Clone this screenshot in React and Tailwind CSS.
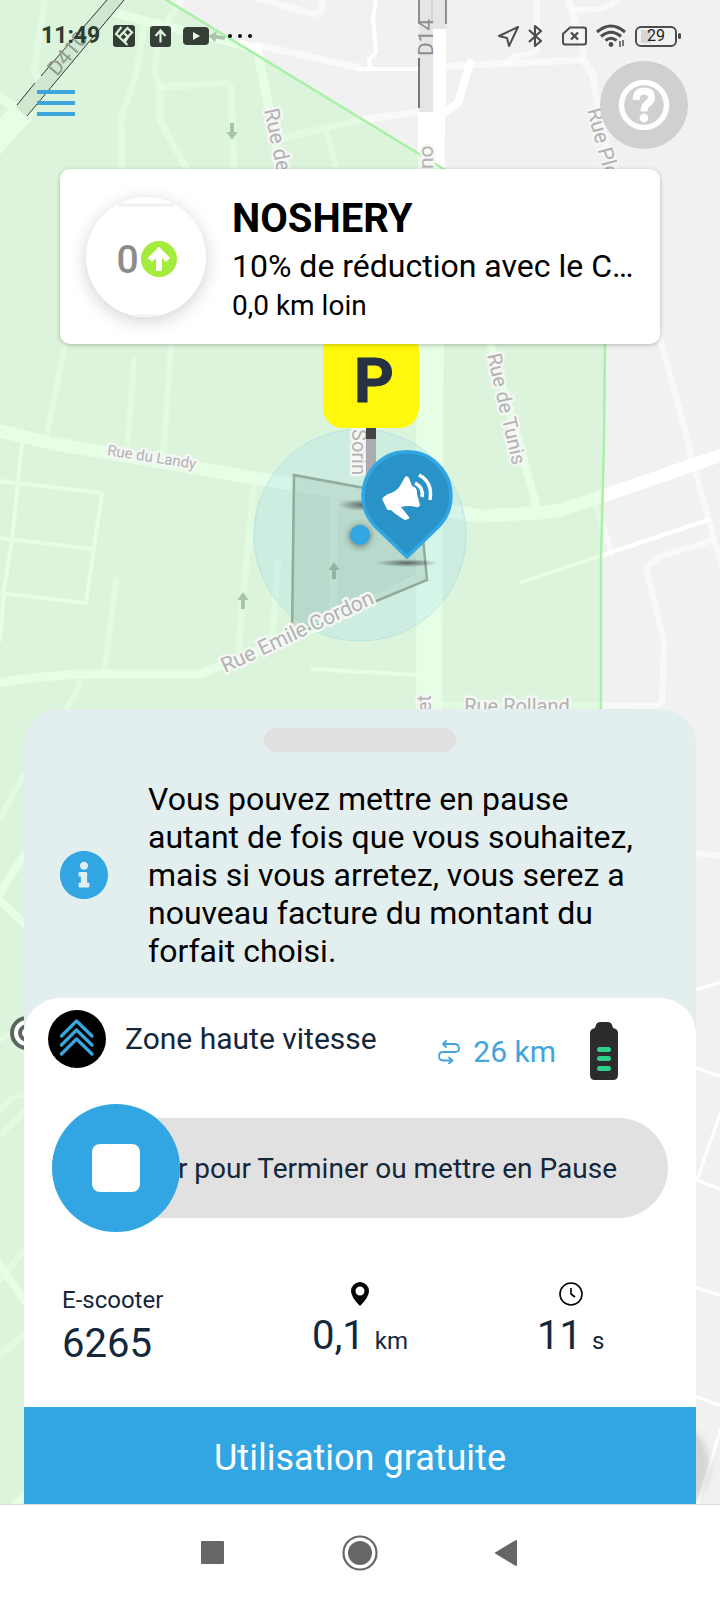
import { FaInfoCircle } from 'react-icons/fa';

// [points, width] of every street on the map
const ROADS = [
  ['45,0 34,70 40,82', 7],
  ['22,112 -10,148', 24],
  ['-4,94 20,112', 9],
  ['113,12 145,21 257,49', 9],
  ['257,45 360,68', 7],
  ['145,20 136,75 121,118 122,170', 7],
  ['182,0 166,24 158,32 155,75 160,87 160,120 187,170', 7],
  ['160,87 226,83 231,88 234,170', 7],
  ['257,48 281,170 300,260', 9],
  ['285,138 360,120 420,112', 7],
  ['327,133 337,170', 6],
  ['250,-4 312,14 321,12 323,0', 7],
  ['376,0 373,18 376,52 369,60 370,68', 4],
  ['360,69 420,69', 4],
  ['446,66 580,60', 7],
  ['470,63 458,103 445,112', 8],
  ['537,0 537,50 530,54 514,56 508,62', 6],
  ['568,0 583,45 583,60 593,75 600,120 620,200', 7],
  ['573,10 600,9 612,5 620,-3', 6],
  ['655,320 685,430 693,463 708,517 722,566', 6],
  ['65,345 47,434', 6],
  ['134,360 127,450', 6],
  ['171,345 163,460', 6],
  ['-4,430 50,443 180,465 253,478 345,493 480,516 540,513 560,510 600,497 722,455', 13],
  ['22,443 12,540 4,590 0,640', 4],
  ['0,481 102,493 86,603 0,593', 4],
  ['0,538 91,549', 4],
  ['116,580 104,672', 6],
  ['254,483 240,630 239,650', 7],
  ['278,564 272,640', 7],
  ['-4,683 40,677 80,674 200,674 230,662 310,630 420,577', 9],
  ['82,676 75,695 24,775 0,818', 6],
  ['24,855 0,893', 8],
  ['-3,898 26,925', 8],
  ['334,490 333,620', 8],
  ['312,669 417,675', 4],
  ['488,335 520,445 538,512', 8],
  ['594,500 612,553', 6],
  ['522,582 612,552 708,520', 4],
  ['713,540 660,557 646,567 664,642 662,702 656,706 440,705', 6],
  ['26,1025 0,1040', 5],
  ['26,1094 12,1098 0,1110', 5],
  ['26,1110 0,1135', 6],
  ['-2,1263 26,1303', 8],
  ['26,1248 0,1280', 6],
  ['26,1333 -2,1357', 7],
  ['28,1492 12,1508', 8],
  ['694,853 722,856', 6],
  ['694,990 722,982', 3],
  ['694,1067 722,1077', 3],
  ['722,1108 697,1180 722,1190', 3],
  ['694,1287 722,1296', 3],
  ['694,1396 722,1406', 3],
  ['722,1425 697,1506', 3],
];

// [text, x, y, angle, size, anchor]
const LABELS = [
  ['Rue de', 264, 110, 78, 21, 'start'],
  ['Rue Ple', 587, 110, 75, 21, 'start'],
  ['no', 433, 169, -90, 21, 'start'],
  ['Rue du Landy', 151, 462, 9, 15, 'middle'],
  ['Rue de Tunis', 487, 355, 77, 20, 'start'],
  ['Sorin', 352, 429, 90, 20, 'start'],
  ['Rue Emile Cordon', 225, 673, -25, 21, 'start'],
  ['Rue Rolland', 517, 713, 0, 20, 'middle'],
  ['et', 431, 712, -90, 20, 'start'],
];

function OneWayArrow({ x, y, angle = 0, color = '#a9c4ab' }) {
  return (
    <path
      d="M0 -9 L5.500 -1 H2 V8 H-2 V-1 H-5.500 Z"
      fill={color}
      transform={`translate(${x} ${y}) rotate(${angle})`}
    />
  );
}

function CityMap() {
  return (
    <svg
      className="absolute inset-0 w-full h-full"
      viewBox="0 0 720 1504"
      preserveAspectRatio="xMidYMin slice"
      fontFamily="Roboto, sans-serif"
      aria-hidden="true"
    >
      <defs>
        <filter id="soft" x="-50%" y="-100%" width="200%" height="300%">
          <feGaussianBlur stdDeviation="3" />
        </filter>
        <radialGradient id="ground">
          <stop offset="0" stopColor="#333" stopOpacity="0.7" />
          <stop offset="1" stopColor="#333" stopOpacity="0" />
        </radialGradient>
      </defs>
      <rect width="720" height="1504" fill="#f1f1f1" />

      <g fill="none" stroke="#fff" strokeLinejoin="round" strokeLinecap="round">
        {ROADS.map(([points, width]) => (
          <polyline key={points} points={points} strokeWidth={width} strokeOpacity={width < 8 && width > 4 ? 0.6 : 1} />
        ))}
      </g>
      <path d="M418 112 H445 L443 470 L439 1504 H417 L416 470 Z" fill="#fff" />

      {/* D14 tunnel */}
      <path d="M419 0 H446 V29 H433 V112 H419 Z" fill="#e5e5e5" />
      <path d="M433 29 H446 V113 H433 Z" fill="#fff" />
      <path d="M432 0 V24" stroke="#c4c4c4" />
      <path d="M419 0 V24 M446 0 V24" stroke="#333" />
      <path d="M419 58 V108" stroke="#777" strokeWidth="2" />

      {/* geofence */}
      <path
        d="M-5 -5 H158 L166 0 L442 168 L605 268 V344 L604 470 L601 560 V1510 H-5 Z"
        fill="rgb(165,250,165)"
        fillOpacity="0.29"
      />
      <path d="M160 -4 L442 168 L605 268 V344 L604 440 L601 560 V1510" fill="none" stroke="#a9f0a9" strokeWidth="2.5" />

      {/* D410 tunnel */}
      <path d="M107 0 H124 L26 116 L15 106 Z" fill="#d0e8d0" />
      <path d="M107 0 L41 76 M35 83 L17 105 M124 0 L27 116" stroke="#333" fill="none" />
      <text transform="translate(57 77) rotate(-50)" fontSize="21" fill="#8f9a90">D410</text>
      <text transform="translate(433 56) rotate(-90)" fontSize="21" fill="#8f8f8f">D14</text>

      <OneWayArrow x={232} y={131} angle={180} />
      <OneWayArrow x={217} y={37} angle={-82} />
      <OneWayArrow x={243} y={601} />

      {/* accuracy halo and free zone */}
      <circle cx="360" cy="535" r="106" fill="#8fd3f0" fillOpacity="0.2" stroke="#a9dbe4" strokeOpacity="0.6" />
      <path
        d="M294 475 L370 489 L422 528 L427 580 L292 636 Z"
        fill="#5a7568"
        fillOpacity="0.17"
        stroke="#8fac9f"
        strokeWidth="2.5"
      />
      <OneWayArrow x={334} y={571} color="#94b3a3" />

      {LABELS.map(([text, x, y, angle, size, anchor]) => (
        <text
          key={text}
          transform={`translate(${x} ${y}) rotate(${angle})`}
          fontSize={size}
          textAnchor={anchor}
          fill="#b2b2b2"
          stroke="#f4f7f4"
          strokeWidth="5"
          strokeLinejoin="round"
          paintOrder="stroke"
        >
          {text}
        </text>
      ))}

      {/* transit stop under the sheet */}
      <circle cx="27" cy="1033" r="15" fill="#fff" stroke="#5d665e" strokeWidth="4" />
      <circle cx="27" cy="1033" r="7" fill="none" stroke="#5d665e" strokeWidth="4" />

      {/* locate button under the sheet */}
      <circle cx="664" cy="1466" r="46" fill="#999" opacity="0.3" filter="url(#soft)" />
      <circle cx="664" cy="1459" r="40" fill="#d4d4d4" />

      {/* parking sign */}
      <ellipse cx="364" cy="505" rx="26" ry="6" fill="url(#ground)" />
      <rect x="366" y="428" width="10" height="72" fill="#abacb2" />
      <rect x="366" y="428" width="10" height="11" fill="#444" />
      <rect x="323" y="330" width="96" height="98" rx="20" fill="#fff80c" />
      <text
        x="374"
        y="402"
        fontSize="62"
        fontWeight="700"
        textAnchor="middle"
        fill="#253145"
        stroke="#253145"
        strokeWidth="1"
      >
        P
      </text>

      {/* current position */}
      <circle cx="360" cy="536" r="11" fill="#333" opacity="0.5" filter="url(#soft)" />
      <circle cx="360" cy="535" r="10" fill="#32a6e2" />

      {/* promo pin */}
      <ellipse cx="407" cy="563" rx="31" ry="4" fill="url(#ground)" />
      <path
        d="M407 557 L375 526 A44 44 0 1 1 439 526 Z"
        fill="#2992c6"
        stroke="#32a6e2"
        strokeWidth="3.5"
        strokeLinejoin="round"
      />
      <path
        d="M382 499 Q383 497 388 494 Q396 492 400 486 L405 477 Q407 475 409 478 L412 486 Q418 488 417 494 L420 505 Q419 508 416 507 Q408 505 401 507 L409 517 Q410 519 408 519 L405 520 Q396 515 391 510 Q387 511 386 507 Z"
        fill="#fff"
      />
      <g fill="none" stroke="#fff" strokeWidth="3.5">
        <path d="M415 483 Q424 488 422 497" />
        <path d="M419 475 Q433 482 430 500" />
      </g>
    </svg>
  );
}

function StatusBar() {
  return (
    <div className="flex h-[50px] items-end justify-between pr-[39px] pl-[41px] text-[#2f3a30]">
      <div className="flex h-7 items-center">
        <span className="text-[23px] leading-7 font-bold">11:49</span>
        <svg className="ml-3 h-6 w-6" viewBox="0 0 24 24">
          <rect x="1" y="1" width="22" height="22" rx="3" fill="#363f36" />
          <g fill="none" stroke="#dcf3dc" strokeWidth="2.2">
            <path d="M9.500 3 L4 10 L15.500 21" />
            <path d="M7.500 12.500 L15.500 4 L20 8.500 L12 16.500" />
            <path d="M11.500 8.500 L16 13 L13 18" />
          </g>
        </svg>
        <svg className="ml-3 h-6 w-6" viewBox="0 0 24 24">
          <rect x="2" y="2" width="21" height="21" rx="3" fill="#363f36" />
          <path d="M12.500 18.500 V7 M7.500 12 L12.500 6.500 L17.500 12" fill="none" stroke="#dcf3dc" strokeWidth="2.200" />
        </svg>
        <svg className="ml-2.5 h-6 w-7" viewBox="0 0 28 24">
          <rect x="1" y="3" width="26" height="18" rx="4" fill="#363f36" />
          <path d="M11 8 L18 12 L11 16 Z" fill="#e9f9e9" />
        </svg>
        <svg className="ml-[18px] h-6 w-6" viewBox="0 0 24 24" fill="#111">
          <circle cx="2" cy="12" r="2" />
          <circle cx="12" cy="12" r="2" />
          <circle cx="22" cy="12" r="2" />
        </svg>
      </div>
      <div className="flex h-7 items-center text-[#4c4c4c]">
        <svg className="h-6 w-6" viewBox="0 0 24 24" fill="none" stroke="currentColor" strokeWidth="2" strokeLinejoin="round">
          <path d="M21 3 L2 12 L10 14 L12 22 Z" />
        </svg>
        <svg className="ml-1 h-6 w-5" viewBox="0 0 20 24" fill="none" stroke="currentColor" strokeWidth="2.200" strokeLinejoin="round">
          <path d="M4 6 L16 17 L10 22 V2 L16 7 L4 18" />
        </svg>
        <svg className="ml-4 h-6 w-7" viewBox="0 0 28 24" fill="none" stroke="currentColor" strokeWidth="2">
          <path d="M9 3.500 H23 Q25 3.500 25 5.500 V18 Q25 20.500 23 20.500 H4 Q2 20.500 2 18 V10 Z" />
          <path d="M10 8.500 L17 15.500 M17 8.500 L10 15.500" strokeWidth="2.400" />
        </svg>
        <svg className="ml-1.5 h-6 w-8" viewBox="0 0 32 24" fill="none" stroke="currentColor" strokeWidth="3">
          <path d="M2 8 Q16 -4 30 8" />
          <path d="M6 12.500 Q16 4 26 12.500" />
          <path d="M10.500 16.500 Q16 12 21.500 16.500" />
          <circle cx="16" cy="20.500" r="2.400" fill="currentColor" stroke="none" />
          <path d="M25 17 V23 M28 16 V22" strokeWidth="1.500" />
        </svg>
        <div className="relative ml-2 flex h-[21px] w-[42px] items-center justify-center rounded-md border-2 border-current text-base leading-4">
          <span className="absolute inset-y-0.5 left-1 w-2.5 bg-[#d6d6d6]"></span>
          <span className="relative text-[#222]">29</span>
        </div>
        <span className="ml-px h-1.5 w-[3px] rounded bg-current"></span>
      </div>
    </div>
  );
}

function PromoCard() {
  return (
    <a
      href="#promo"
      className="mx-[60px] mt-5 flex h-[175px] items-center gap-[26px] rounded-[10px] bg-white pr-6 pl-[26px] text-black shadow-[0_1px_4px_rgba(0,0,0,0.25)]"
    >
      <span className="flex h-[120px] w-[120px] shrink-0 items-center justify-center rounded-full bg-white shadow-[0_4px_18px_rgba(0,0,0,0.18)]">
        <svg className="h-full w-full" viewBox="0 0 120 120">
          <path d="M32 8 H88" stroke="#eef2f5" strokeWidth="3" />
          <path d="M46 118.500 H74" stroke="#eef2f5" strokeWidth="2" />
          <text x="41.500" y="76" fontFamily="Roboto, sans-serif" fontSize="39" fontWeight="500" textAnchor="middle" fill="#8c8c8c">0</text>
          <circle cx="73" cy="62" r="18" fill="#a4ec3c" />
          <path d="M73 74 V56 M64 63 L73 54 L82 63" fill="none" stroke="#fff" strokeWidth="6" />
        </svg>
      </span>
      <span className="flex min-w-0 flex-col pt-1">
        <span className="text-[40px] leading-[50px] font-bold">NOSHERY</span>
        <span className="truncate text-[32px] leading-[44px]">10% de réduction avec le C…</span>
        <span className="text-[28px] leading-9">0,0 km loin</span>
      </span>
    </a>
  );
}

function InfoNotice() {
  return (
    <div className="flex flex-col px-9 pt-[19px] pb-7">
      <div className="h-6 w-48 self-center rounded-full bg-[#e0e0e0]"></div>
      <div className="mt-7 flex items-center gap-10">
        <FaInfoCircle viewBox="8 8 496 496" className="h-12 w-12 shrink-0 text-[#32a6e2]" />
        <p className="text-[32px] leading-[38px] text-black">
          Vous pouvez mettre en pause<br />
          autant de fois que vous souhaitez,<br />
          mais si vous arretez, vous serez a<br />
          nouveau facture du montant du<br />
          forfait choisi.
        </p>
      </div>
    </div>
  );
}

function VehicleHeader() {
  return (
    <div className="flex items-start pt-3 pr-[78px] pl-6">
      <svg className="h-[58px] w-[58px] shrink-0" viewBox="0 0 58 58">
        <circle cx="29" cy="29" r="29" fill="#000" />
        <g fill="none" stroke="#3aa4dc" strokeWidth="3.400" strokeLinecap="round" strokeLinejoin="round">
          <path d="M13.500 26 L28.500 11 L44 26" />
          <path d="M13.500 35 L28.500 20 L44 35" />
          <path d="M13.500 44 L28.500 29 L44 44" />
        </g>
      </svg>
      <span className="ml-[19px] text-[30px] leading-[58px]">Zone haute vitesse</span>
      <div className="mt-6 ml-auto flex items-center text-[#41a5dc]">
        <svg className="mr-3 h-6 w-6" viewBox="0 0 24 24" fill="none" stroke="currentColor" strokeWidth="1.800" strokeLinecap="round" strokeLinejoin="round">
          <path d="M9 1 L6 4 L9 7 M6 4 H17 Q22 4 22 8.500 Q22 12 18 12 H6 Q2 12 2 16 Q2 20.500 6 20.500 H15 M12 17.500 L15.500 20.500 L12 23.500" />
        </svg>
        <span className="text-[30px] leading-9">26 km</span>
      </div>
      <svg className="mt-3 ml-[34px] h-[58px] w-7" viewBox="0 0 28 58">
        <path d="M5 6 Q6 0 10 0 H18 Q22 0 23 6 Q28 7 28 11 V53 Q28 58 23 58 H5 Q0 58 0 53 V11 Q0 7 5 6 Z" fill="#2c2c2c" />
        <g fill="#2fd08a">
          <rect x="7" y="25" width="14" height="5" rx="2.500" />
          <rect x="7" y="34" width="14" height="5" rx="2.500" />
          <rect x="7" y="44" width="14" height="5" rx="2.500" />
        </g>
      </svg>
    </div>
  );
}

function SwipeControl() {
  return (
    <div className="mt-6 mr-7 ml-7 grid items-center">
      <div className="col-start-1 row-start-1 flex h-[100px] items-center justify-end overflow-hidden rounded-full bg-[#e1e1e1] pt-0.5 pr-[51px]">
        <span className="text-right text-[28px] leading-9 whitespace-nowrap">r pour Terminer ou mettre en Pause</span>
      </div>
      <button
        aria-label="Terminer"
        className="col-start-1 row-start-1 flex h-32 w-32 items-center justify-center rounded-full bg-[#32a6e2]"
      >
        <span className="h-12 w-12 rounded-lg bg-white"></span>
      </button>
    </div>
  );
}

function TripStats() {
  return (
    <div className="grid grid-cols-3 px-5 pt-12 pb-[35px]">
      <div className="flex flex-col pt-1 pl-[18px]">
        <span className="text-2xl leading-8">E-scooter</span>
        <span className="text-[40px] leading-[56px]">6265</span>
      </div>
      <div className="flex flex-col items-center gap-0.5 pt-0.5">
        <svg className="h-6 w-5" viewBox="0 0 20 24">
          <path fillRule="evenodd" d="M10 0 A9 9 0 0 1 19 9 Q19 15 10 24 Q1 15 1 9 A9 9 0 0 1 10 0 Z M10 4.500 A4.500 4.500 0 1 0 10 13.500 A4.500 4.500 0 1 0 10 4.500 Z" fill="#000" />
        </svg>
        <span className="flex items-baseline gap-2.5 text-[40px] leading-[56px]">
          0,1 <span className="text-2xl">km</span>
        </span>
      </div>
      <div className="flex flex-col items-center gap-0.5 pt-0.5">
        <svg className="h-6 w-6" viewBox="0 0 24 24" fill="none" stroke="#000" strokeWidth="1.600">
          <circle cx="12" cy="12" r="11" />
          <path d="M12 6 V12 L16 15" />
        </svg>
        <span className="flex items-baseline gap-2.5 text-[40px] leading-[56px]">
          11 <span className="text-2xl">s</span>
        </span>
      </div>
    </div>
  );
}

function AndroidNav() {
  return (
    <nav className="relative flex h-24 items-center justify-center gap-28 border-t border-[#dedede] bg-white">
      <button aria-label="Récents" className="flex h-9 w-9 items-center justify-center">
        <span className="h-[23px] w-[23px] rounded-[1px] bg-[#666]"></span>
      </button>
      <button aria-label="Accueil" className="flex h-9 w-9 items-center justify-center">
        <svg className="h-9 w-9" viewBox="0 0 36 36">
          <circle cx="18" cy="18" r="16.500" fill="none" stroke="#666" strokeWidth="2.200" />
          <circle cx="18" cy="18" r="12" fill="#666" />
        </svg>
      </button>
      <button aria-label="Retour" className="flex h-9 w-9 items-center justify-center">
        <svg className="h-9 w-9" viewBox="0 0 36 36">
          <path d="M26 6 V30 L6 18 Z" fill="#666" stroke="#666" strokeWidth="2" strokeLinejoin="round" />
        </svg>
      </button>
    </nav>
  );
}

export default function App() {
  return (
    <div className="flex min-h-screen flex-col bg-white font-[Roboto,sans-serif] text-[#14273b]">
      <div className="relative flex flex-1 flex-col overflow-hidden">
        <CityMap />
        <div className="relative flex flex-1 flex-col">
          <StatusBar />
          <header className="mt-[11px] flex items-start justify-between pr-8 pl-[37px]">
            <button aria-label="Menu" className="mt-7 flex h-7 w-[38px] flex-col justify-between py-px">
              <span className="h-1 w-full bg-[#3ca6da]"></span>
              <span className="h-1 w-full bg-[#3ca6da]"></span>
              <span className="h-1 w-full bg-[#3ca6da]"></span>
            </button>
            <button aria-label="Aide" className="h-[88px] w-[88px] rounded-full bg-[#d0d0d0]">
              <svg className="h-full w-full" viewBox="0 0 88 88">
                <circle cx="44" cy="44" r="22.500" fill="none" stroke="#fff" strokeWidth="5.500" />
                <path d="M36 39 Q36.500 30 44 30 Q51.500 30 51.500 36.500 Q51.500 40 47.500 42.500 Q44 45 44 50.500" fill="none" stroke="#fff" strokeWidth="7" />
                <circle cx="44" cy="57" r="4.400" fill="#fff" />
              </svg>
            </button>
          </header>
          <PromoCard />

          <section className="mx-6 mt-auto rounded-t-[36px] bg-[#e3efef]">
            <InfoNotice />
            <div className="rounded-t-[36px] bg-white">
              <VehicleHeader />
              <SwipeControl />
              <TripStats />
            </div>
            <button className="h-[97px] w-full bg-[#32a6e2] pt-1 text-4xl text-white">Utilisation gratuite</button>
          </section>
        </div>
      </div>
      <AndroidNav />
    </div>
  );
}
